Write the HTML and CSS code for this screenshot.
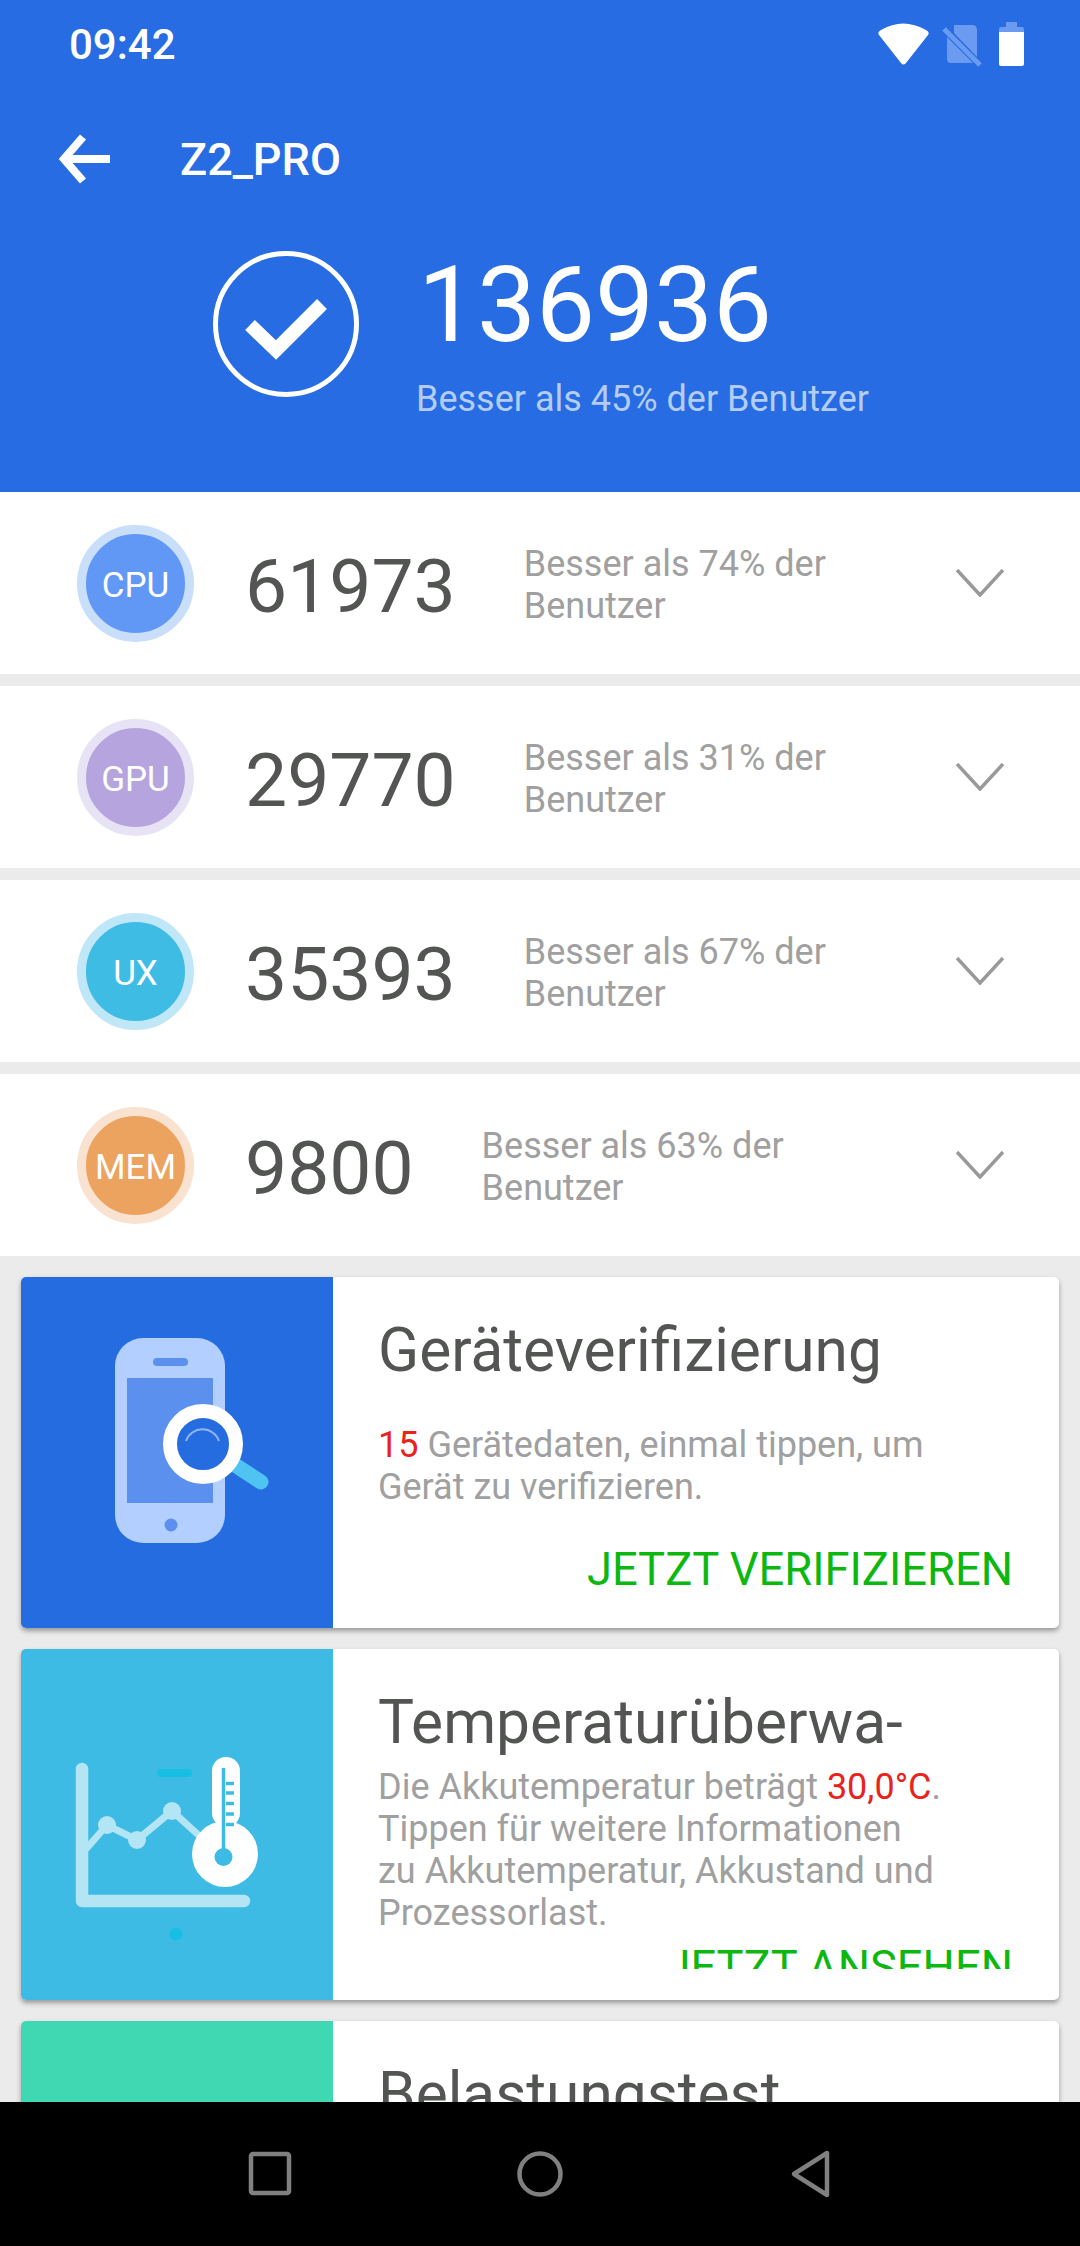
FILE: index.html
```html
<!DOCTYPE html>
<html lang="de">
<head>
<meta charset="utf-8">
<title>Z2_PRO</title>
<link rel="stylesheet" href="styles.css">
</head>
<body>
<div class="app">
  <header class="header">
    <div class="status">
      <span class="time">09:42</span>
      <svg class="status-icons" width="156" height="50" viewBox="875 18 156 50">
        <path class="w" d="M881 29Q903 16 926 29Q930 31 928 34L906 62Q903 65 901 62L879 34Q877 31 881 29Z"/>
        <path class="dim" d="M954 24H972Q977 24 977 29V56L954 32ZM947 36L973 62H951Q947 62 947 58Z"/>
        <path class="dimline" d="M944 28L980 64"/>
        <path class="dim" d="M1006 21H1017V26H1022Q1024 26 1024 28V31H999V28Q999 26 1001 26H1006Z"/>
        <path class="w" d="M999 31H1024V63Q1024 65 1022 65H1001Q999 65 999 63Z"/>
      </svg>
    </div>
    <div class="toolbar">
      <svg class="back" width="54" height="54" viewBox="0 0 54 54"><path d="M25 5L6 27L25 49M6 27H52" /></svg>
      <span class="device">Z2_PRO</span>
    </div>
    <div class="score">
      <svg class="check" width="148" height="148" viewBox="0 0 148 148">
        <circle cx="74" cy="74" r="70.500"/>
        <path d="M38 75L64 100L110 54"/>
      </svg>
      <div class="score-text">
        <div class="score-num">136936</div>
        <div class="score-sub">Besser als 45% der Benutzer</div>
      </div>
    </div>
  </header>

  <main class="main">
    <section class="row">
      <div class="badge badge-cpu"><span>CPU</span></div>
      <div class="num">61973</div>
      <div class="desc">Besser als 74% der Benutzer</div>
      <svg class="chev" width="48" height="28" viewBox="0 0 48 28"><path d="M1 1L24 26L47 1"/></svg>
    </section>
    <section class="row">
      <div class="badge badge-gpu"><span>GPU</span></div>
      <div class="num">29770</div>
      <div class="desc">Besser als 31% der Benutzer</div>
      <svg class="chev" width="48" height="28" viewBox="0 0 48 28"><path d="M1 1L24 26L47 1"/></svg>
    </section>
    <section class="row">
      <div class="badge badge-ux"><span>UX</span></div>
      <div class="num">35393</div>
      <div class="desc">Besser als 67% der Benutzer</div>
      <svg class="chev" width="48" height="28" viewBox="0 0 48 28"><path d="M1 1L24 26L47 1"/></svg>
    </section>
    <section class="row">
      <div class="badge badge-mem"><span>MEM</span></div>
      <div class="num">9800</div>
      <div class="desc">Besser als 63% der Benutzer</div>
      <svg class="chev" width="48" height="28" viewBox="0 0 48 28"><path d="M1 1L24 26L47 1"/></svg>
    </section>

    <div class="cards">
      <article class="card">
        <div class="panel panel-blue">
          <svg width="312" height="351" viewBox="21 1277 312 351">
            <rect x="115" y="1338" width="110" height="205" rx="28" fill="#b3cfff"/>
            <rect x="153" y="1358" width="35" height="8" rx="4" fill="#5b90ef"/>
            <rect x="127" y="1378" width="86" height="125" fill="#5b90ef"/>
            <circle cx="171" cy="1525" r="6.5" fill="#5b90ef"/>
            <path d="M235 1465L261 1482" stroke="#4fc3f1" stroke-width="15" stroke-linecap="round" fill="none"/>
            <circle cx="203" cy="1444" r="33" fill="#266ce1" stroke="#fff" stroke-width="14"/>
            <path d="M186 1441A17.5 17.5 0 0 1 219 1441" fill="none" stroke="#8fb4f2" stroke-width="2"/>
          </svg>
        </div>
        <div class="body">
          <h2 class="title">Geräteverifizierung</h2>
          <p class="text text-gap"><span class="red">15</span> Gerätedaten, einmal tippen, um Gerät zu verifizieren.</p>
          <div class="action action-gap">JETZT VERIFIZIEREN</div>
        </div>
      </article>

      <article class="card">
        <div class="panel panel-cyan">
          <svg width="312" height="351" viewBox="21 1649 312 351">
            <path d="M82 1769V1901H244" fill="none" stroke="#b3e5f5" stroke-width="12.5" stroke-linecap="round" stroke-linejoin="round"/>
            <path d="M86 1849L107 1825L137 1840L172 1811L205 1841" fill="none" stroke="#b3e5f5" stroke-width="7"/>
            <circle cx="107" cy="1825" r="9" fill="#b3e5f5"/>
            <circle cx="137" cy="1840" r="9" fill="#b3e5f5"/>
            <circle cx="172" cy="1811" r="9" fill="#b3e5f5"/>
            <rect x="157" y="1769" width="35" height="8" rx="4" fill="#17bfe3"/>
            <circle cx="176" cy="1934" r="6.5" fill="#17bfe3"/>
            <rect x="212" y="1757" width="28" height="70" rx="14" fill="#fff"/>
            <circle cx="225" cy="1854" r="33" fill="#fff"/>
            <path d="M223.5 1768V1850M226 1783.5H234M226 1793H234M226 1803.500H234M226 1814H234M226 1824.500H234" fill="none" stroke="#3dbbe4" stroke-width="3.500"/>
            <circle cx="223.500" cy="1857" r="9" fill="#3dbbe4"/>
          </svg>
        </div>
        <div class="body">
          <h2 class="title">Temperaturüberwa-</h2>
          <p class="text text-tight">Die Akkutemperatur beträgt <span class="red">30,0°C</span>. Tippen für weitere Informationen zu Akkutemperatur, Akkustand und Prozessorlast.</p>
          <div class="action">JETZT ANSEHEN</div>
        </div>
      </article>

      <article class="card">
        <div class="panel panel-green"></div>
        <div class="body">
          <h2 class="title">Belastungstest</h2>
        </div>
      </article>
    </div>
  </main>

  <nav class="nav">
    <svg width="64" height="64" viewBox="0 0 64 64"><rect x="13" y="12" width="38" height="39" rx="2"/></svg>
    <svg width="64" height="64" viewBox="0 0 64 64"><circle cx="32" cy="32" r="20.500"/></svg>
    <svg width="64" height="64" viewBox="0 0 64 64"><path d="M16 32L49 11V53Z"/></svg>
  </nav>
</div>
</body>
</html>
```

FILE: styles.css
```css
* { box-sizing: border-box; }
html, body { margin: 0; padding: 0; }
body { font-family: Roboto, "Liberation Sans", sans-serif; background: #ebebeb; }
.app { width: 1080px; height: 2246px; display: flex; flex-direction: column; overflow: hidden; }

.header { height: 492px; flex: none; background: #276ce2; color: #fff; display: flex; flex-direction: column; }
.status { height: 90px; display: flex; align-items: center; justify-content: space-between; padding: 0 49px 0 69px; }
.time { font-size: 42px; font-weight: 500; line-height: 1; }
.status-icons { display: block; margin-top: -2px; }
.status-icons .w { fill: #fff; }
.status-icons .dim { fill: #6a9bf0; }
.status-icons .dimline { stroke: #6a9bf0; stroke-width: 5; fill: none; }

.toolbar { height: 70px; margin-top: 34px; display: flex; align-items: center; padding-left: 58px; gap: 68px; }
.back { display: block; }
.back path { fill: none; stroke: #fff; stroke-width: 8; }
.device { font-size: 45px; font-weight: 500; line-height: 1; }

.score { display: flex; align-items: flex-start; padding: 48px 0 0 212px; gap: 55px; }
.check { display: block; margin-top: 8px; flex: none; }
.check circle { fill: none; stroke: #fff; stroke-width: 5; }
.check path { fill: none; stroke: #fff; stroke-width: 14; }
.score-num { font-size: 105px; font-weight: 400; line-height: 120px; margin: 4px 0 0 3px; }
.score-sub { font-size: 36px; line-height: 42px; color: #b3cdf6; margin-top: 12px; margin-left: 1px; }

.main { flex: 1; min-height: 0; overflow: hidden; display: flex; flex-direction: column; gap: 12px; }
.row { flex: none; height: 182px; background: #fff; display: flex; align-items: center; padding: 0 77px; }
.badge { width: 117px; height: 117px; flex: none; border-radius: 50%; border: 9px solid; display: flex; align-items: center; justify-content: center; color: #fff; font-size: 35px; padding-top: 4px; }
.badge-cpu { background: #6298f5; border-color: #c9def8; }
.badge-gpu { background: #b6a4df; border-color: #e8e2f5; }
.badge-ux { background: #3fbce4; border-color: #bfe7f7; }
.badge-mem { background: #eba35f; border-color: #f9e2d0; }
.num { margin-left: 51px; font-size: 75px; color: #535553; line-height: 1; flex: none; padding-top: 7px; }
.desc { margin-left: 68px; width: 330px; flex: none; font-size: 36px; line-height: 42px; color: #a0a0a0; padding-top: 4px; }
.chev { margin-left: auto; flex: none; display: block; margin-right: -1px; margin-top: -1px; }
.chev path { fill: none; stroke: #999; stroke-width: 3.5; }

.cards { padding: 9px 21px 0; display: flex; flex-direction: column; gap: 21px; }
.card { flex: none; height: 351px; display: flex; background: #fff; border-radius: 5px; box-shadow: 0 3px 5px rgba(0,0,0,.35); overflow: hidden; }
.panel { width: 312px; flex: none; }
.panel svg { display: block; }
.panel-blue { background: #266ce1; }
.panel-cyan { background: #3dbbe4; }
.panel-green { background: #40d8b3; }
.body { flex: 1; min-width: 0; padding: 36px 46px 0 45px; height: 320px; overflow: hidden; }
.title { margin: 0; font-size: 60.4px; font-weight: 400; line-height: 76px; color: #535553; white-space: nowrap; }
.text { margin: 0; max-width: 565px; font-size: 36px; line-height: 42px; color: #a0a0a0; }
.text-gap { margin-top: 35px; }
.text-tight { margin-top: 5px; }
.red { color: #e8231b; }
.action { margin-top: 9px; text-align: right; font-size: 45.3px; line-height: 50px; color: #0cb80f; }
.action-gap { margin-top: 37px; }

.nav { flex: none; height: 144px; background: #000; display: flex; align-items: center; justify-content: center; gap: 206px; }
.nav svg { display: block; }
.nav rect, .nav circle, .nav path { fill: none; stroke: #808080; stroke-width: 4.5; stroke-linejoin: round; }
```
